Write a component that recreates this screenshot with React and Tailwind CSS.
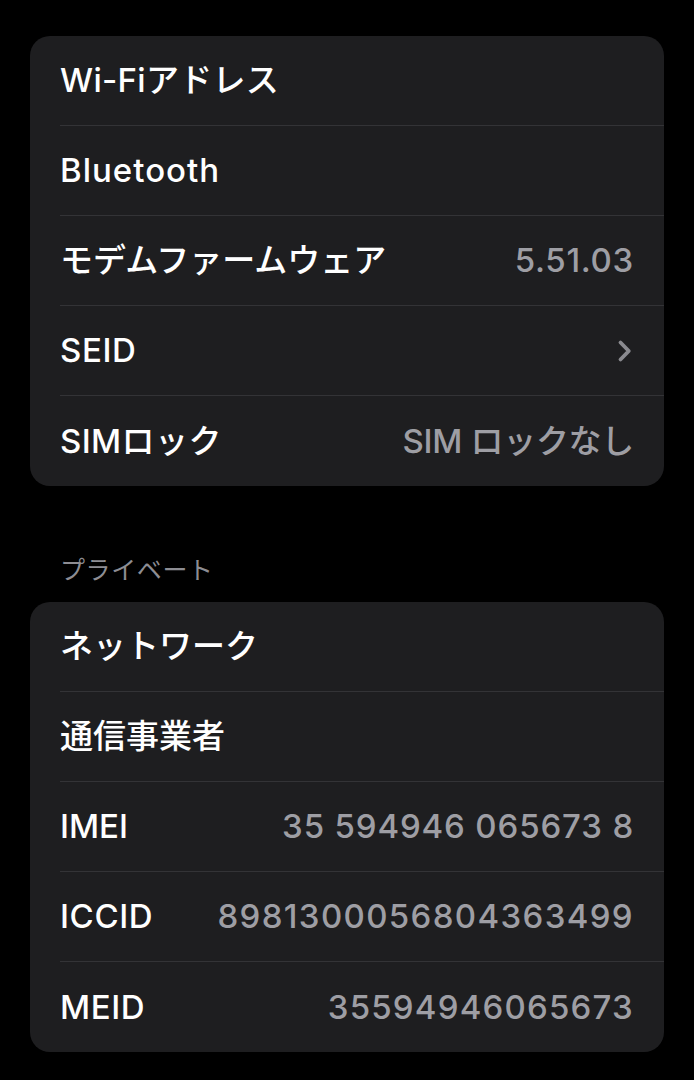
import React from "react";

const font = { fontFamily: 'Inter, "Noto Sans CJK JP", sans-serif' };

function Row({ label, value, chevron, last, labelTrack, valueTrack }) {
  return (
    <div className="pl-[30px]">
      <div
        className={
          "flex h-[90px] items-center justify-between pr-[30px] " +
          (last ? "" : "border-b border-[#333336]")
        }
      >
        <span className={"text-[33px] font-medium leading-none text-white " + (labelTrack || "")}>
          {label}
        </span>
        {value && (
          <span className={"text-[33px] font-medium leading-none text-[#9e9ea4] " + (valueTrack || "")}>
            {value}
          </span>
        )}
        {chevron && (
          <svg width="16" height="24" viewBox="0 0 16 24" className="mr-[1px]">
            <path
              d="M3.5 3.5 L11.8 12 L3.5 20.5"
              fill="none"
              stroke="#8a8a8f"
              strokeWidth="3.8"
              strokeLinecap="round"
              strokeLinejoin="round"
            />
          </svg>
        )}
      </div>
    </div>
  );
}

export default function App() {
  return (
    <div className="min-h-[1080px] w-[694px] bg-black pt-[36px]" style={font}>
      <div className="mx-[30px] overflow-hidden rounded-[20px] bg-[#1e1e20]">
        <Row label="Wi-Fiアドレス" labelTrack="tracking-[0.3px]" />
        <Row label="Bluetooth" labelTrack="tracking-[1px]" />
        <Row label="モデムファームウェア" value="5.51.03" valueTrack="tracking-[0.7px]" />
        <Row label="SEID" chevron labelTrack="tracking-[0.6px]" />
        <Row label="SIMロック" value="SIM ロックなし" labelTrack="tracking-[0.4px]" valueTrack="tracking-[-0.3px]" last />
      </div>
      <div className="px-[60px] pt-[71px] pb-[19px]">
        <div className="text-[25px] leading-[26px] tracking-[0.6px] text-[#8d8d93]">プライベート</div>
      </div>
      <div className="mx-[30px] overflow-hidden rounded-[20px] bg-[#1e1e20]">
        <Row label="ネットワーク" />
        <Row label="通信事業者" />
        <Row label="IMEI" value="35 594946 065673 8" valueTrack="tracking-[0.85px]" />
        <Row label="ICCID" value="8981300056804363499" labelTrack="tracking-[0.6px]" valueTrack="tracking-[1.35px]" />
        <Row label="MEID" value="35594946065673" labelTrack="tracking-[0.6px]" valueTrack="tracking-[1.2px]" last />
      </div>
    </div>
  );
}
